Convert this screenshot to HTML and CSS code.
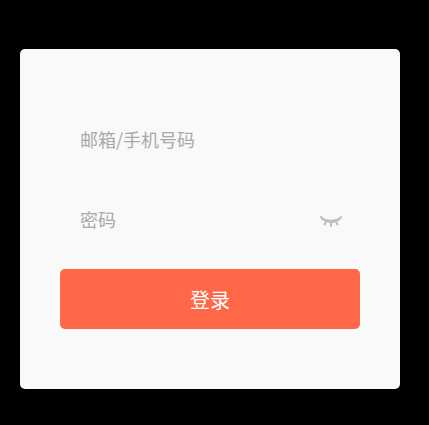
FILE: index.html
```html
<!DOCTYPE html>
<html lang="zh-CN">
<head>
    <meta charset="UTF-8">
    <meta name="viewport" content="width=device-width, initial-scale=1.0">
    <title>登录</title>
    <link rel="stylesheet" href="styles.css">
</head>
<body>
    <div class="login-card">
        <div class="field">
            <input type="text" placeholder="邮箱/手机号码">
        </div>
        <div class="field">
            <input type="password" placeholder="密码">
            <svg class="eye-icon" width="24" height="12" viewBox="0 0 24 12">
                <path d="M1 1.2C1.6.8 2.2.8 2.7 1.4 7 5.8 17 5.8 21.3 1.4 21.8.8 22.4.8 23 1.2 23 2 22.6 3 21.8 3.9 17 9.2 7 9.2 2.2 3.9 1.4 3 1 2 1 1.2Z" fill="#bdbdbd"/>
                <path d="M6.5 7.5L5.5 9.5M12 8.5L12 11M17.5 7.5L18.5 9.5" fill="none" stroke="#bdbdbd" stroke-width="2" stroke-linecap="round"/>
            </svg>
        </div>
        <button class="login-button">登录</button>
    </div>
</body>
</html>
```

FILE: styles.css
```css
body {
    font-family: "Noto Sans CJK SC", sans-serif;
    margin: 0;
    padding: 49px 0 0 20px;
    height: 425px;
    box-sizing: border-box;
    background-color: #000;
    overflow: hidden;
}
.login-card {
    width: 380px;
    height: 340px;
    padding: 60px 40px 0;
    box-sizing: border-box;
    background-color: #f9f9f9;
    border-radius: 5px;
}
.field {
    display: flex;
    align-items: center;
    height: 60px;
    margin-bottom: 20px;
    padding: 0 17px 0 20px;
    box-sizing: border-box;
}
.field input {
    flex-grow: 1;
    min-width: 0;
    padding: 0;
    border: none;
    outline: none;
    background: none;
    font-family: inherit;
    font-size: 18px;
    color: #333;
}
.field input::placeholder {
    color: #a9a9a9;
    opacity: 1;
}
.eye-icon {
    flex-shrink: 0;
    margin-top: 4px;
}
.login-button {
    display: block;
    width: 100%;
    height: 60px;
    padding: 0;
    border: none;
    border-radius: 5px;
    background-color: #ff6749;
    color: #fff;
    font-family: inherit;
    font-size: 20px;
    cursor: pointer;
}
```
